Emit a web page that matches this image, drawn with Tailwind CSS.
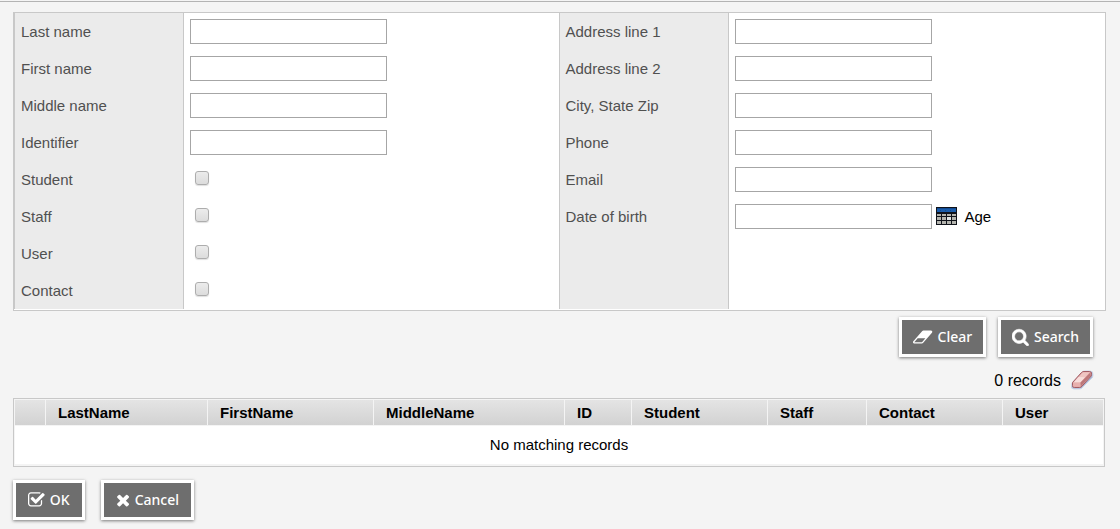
<!DOCTYPE html>
<html lang="en">
<head>
  <meta charset="UTF-8" />
  <meta name="viewport" content="width=device-width, initial-scale=1.0" />
  <title>Person Search</title>
  <script src="https://cdn.jsdelivr.net/npm/@tailwindcss/browser@4"></script>
</head>
<body class="bg-[#f4f4f4] min-h-screen pt-px font-['Liberation_Sans',Arial,sans-serif] text-[15px] text-black">
  <form id="searchForm" class="border-t border-[#b3b3b3] pt-[10px] pl-[13px] pr-[14px]">

    <!-- Search fields -->
    <div class="grid grid-cols-[calc(50%-1px)_1fr] bg-white border border-[#c8c8c8] pb-px">
      <div class="text-[#505050]">
        <div class="flex h-[37px]">
          <label for="lastName" class="w-[170px] bg-[#ebebeb] border-x border-[#c8c8c8] pl-[6px] leading-[37px]">Last name</label>
          <input type="text" id="lastName" class="w-[197px] h-[25px] mt-[6px] ml-[6px] px-1 bg-white border border-[#a6a6a6]">
        </div>
        <div class="flex h-[37px]">
          <label for="firstName" class="w-[170px] bg-[#ebebeb] border-x border-[#c8c8c8] pl-[6px] leading-[37px]">First name</label>
          <input type="text" id="firstName" class="w-[197px] h-[25px] mt-[6px] ml-[6px] px-1 bg-white border border-[#a6a6a6]">
        </div>
        <div class="flex h-[37px]">
          <label for="middleName" class="w-[170px] bg-[#ebebeb] border-x border-[#c8c8c8] pl-[6px] leading-[37px]">Middle name</label>
          <input type="text" id="middleName" class="w-[197px] h-[25px] mt-[6px] ml-[6px] px-1 bg-white border border-[#a6a6a6]">
        </div>
        <div class="flex h-[37px]">
          <label for="identifier" class="w-[170px] bg-[#ebebeb] border-x border-[#c8c8c8] pl-[6px] leading-[37px]">Identifier</label>
          <input type="text" id="identifier" class="w-[197px] h-[25px] mt-[6px] ml-[6px] px-1 bg-white border border-[#a6a6a6]">
        </div>
        <div class="flex h-[37px]">
          <label for="student" class="w-[170px] bg-[#ebebeb] border-x border-[#c8c8c8] pl-[6px] leading-[37px]">Student</label>
          <input type="checkbox" id="student" class="appearance-none size-[14px] mt-[10px] ml-[11px] rounded-[3px] border border-[#adadad] bg-linear-to-b from-[#ececec] to-[#dcdcdc] shadow-[0_1px_1px_#e0e0e0] checked:from-[#888888] checked:to-[#666666]">
        </div>
        <div class="flex h-[37px]">
          <label for="staff" class="w-[170px] bg-[#ebebeb] border-x border-[#c8c8c8] pl-[6px] leading-[37px]">Staff</label>
          <input type="checkbox" id="staff" class="appearance-none size-[14px] mt-[10px] ml-[11px] rounded-[3px] border border-[#adadad] bg-linear-to-b from-[#ececec] to-[#dcdcdc] shadow-[0_1px_1px_#e0e0e0] checked:from-[#888888] checked:to-[#666666]">
        </div>
        <div class="flex h-[37px]">
          <label for="user" class="w-[170px] bg-[#ebebeb] border-x border-[#c8c8c8] pl-[6px] leading-[37px]">User</label>
          <input type="checkbox" id="user" class="appearance-none size-[14px] mt-[10px] ml-[11px] rounded-[3px] border border-[#adadad] bg-linear-to-b from-[#ececec] to-[#dcdcdc] shadow-[0_1px_1px_#e0e0e0] checked:from-[#888888] checked:to-[#666666]">
        </div>
        <div class="flex h-[37px]">
          <label for="contact" class="w-[170px] bg-[#ebebeb] border-x border-[#c8c8c8] pl-[6px] leading-[37px]">Contact</label>
          <input type="checkbox" id="contact" class="appearance-none size-[14px] mt-[10px] ml-[11px] rounded-[3px] border border-[#adadad] bg-linear-to-b from-[#ececec] to-[#dcdcdc] shadow-[0_1px_1px_#e0e0e0] checked:from-[#888888] checked:to-[#666666]">
        </div>
      </div>

      <div class="flex flex-col text-[#505050]">
        <div class="flex h-[37px]">
          <label for="address1" class="w-[170px] bg-[#ebebeb] border-x border-[#c8c8c8] pl-[6px] leading-[37px]">Address line 1</label>
          <input type="text" id="address1" class="w-[197px] h-[25px] mt-[6px] ml-[6px] px-1 bg-white border border-[#a6a6a6]">
        </div>
        <div class="flex h-[37px]">
          <label for="address2" class="w-[170px] bg-[#ebebeb] border-x border-[#c8c8c8] pl-[6px] leading-[37px]">Address line 2</label>
          <input type="text" id="address2" class="w-[197px] h-[25px] mt-[6px] ml-[6px] px-1 bg-white border border-[#a6a6a6]">
        </div>
        <div class="flex h-[37px]">
          <label for="city" class="w-[170px] bg-[#ebebeb] border-x border-[#c8c8c8] pl-[6px] leading-[37px]">City, State Zip</label>
          <input type="text" id="city" class="w-[197px] h-[25px] mt-[6px] ml-[6px] px-1 bg-white border border-[#a6a6a6]">
        </div>
        <div class="flex h-[37px]">
          <label for="phone" class="w-[170px] bg-[#ebebeb] border-x border-[#c8c8c8] pl-[6px] leading-[37px]">Phone</label>
          <input type="text" id="phone" class="w-[197px] h-[25px] mt-[6px] ml-[6px] px-1 bg-white border border-[#a6a6a6]">
        </div>
        <div class="flex h-[37px]">
          <label for="email" class="w-[170px] bg-[#ebebeb] border-x border-[#c8c8c8] pl-[6px] leading-[37px]">Email</label>
          <input type="text" id="email" class="w-[197px] h-[25px] mt-[6px] ml-[6px] px-1 bg-white border border-[#a6a6a6]">
        </div>
        <div class="flex h-[37px]">
          <label for="dob" class="w-[170px] bg-[#ebebeb] border-x border-[#c8c8c8] pl-[6px] leading-[37px]">Date of birth</label>
          <input type="text" id="dob" class="w-[197px] h-[25px] mt-[6px] ml-[6px] px-1 bg-white border border-[#a6a6a6]">
          <button type="button" aria-label="Pick a date" class="ml-1 mr-2 h-9">
            <svg class="w-[21px] h-[18px]" viewBox="0 0 21 18" shape-rendering="crispEdges">
              <path fill="#10131a" d="M0 0h21v18H0z"/>
              <path fill="#1a5cab" d="M1 1h19v4H1z"/>
              <path fill="#114a92" d="M1 1h19v1H1zM4 3h1v1H4zM9 3h1v1H9zM14 3h1v1h-1z"/>
              <path fill="#b4b4ae" d="M1 7h4v2H1zM6 7h4v2H6zM11 7h4v2h-4zM16 7h4v2h-4zM1 10h4v3H1zM6 10h4v3H6zM16 10h4v3h-4zM1 14h4v3H1zM6 14h4v3H6zM11 14h4v3h-4zM16 14h4v3h-4z"/>
              <path fill="#e2e6e6" d="M11 10h4v3h-4z"/>
            </svg>
          </button>
          <span class="text-black leading-[37px]">Age</span>
        </div>
        <div class="w-[170px] grow bg-[#ebebeb] border-x border-[#c8c8c8]"></div>
      </div>
    </div>

    <div class="flex justify-end gap-3 mt-[6px] pr-[13px]">
      <button type="reset" class="flex items-center gap-[5px] h-10 px-[11px] border-[3px] border-white bg-[#6e6e6e] hover:bg-[#555555] text-white text-sm font-medium font-['Noto_Sans',sans-serif] shadow-[0_1px_3px_#00000080]">
        <svg class="h-[18px]" viewBox="0 0 1920 1792" fill="currentColor"><path d="M896 1408l336-384H464l-336 384h768zM1909 331q15 34 9.500 71.500T1889 468L993 1492q-38 44-97 44H128q-38 0-69.500-20.500T11 1461q-15-34-9.500-71.500T31 1324L927 300q38-44 97-44h768q38 0 69.500 20.500T1909 331z"/></svg>
        Clear
      </button>
      <button type="submit" class="flex items-center gap-[5px] h-10 px-[11px] border-[3px] border-white bg-[#6e6e6e] hover:bg-[#555555] text-white text-sm font-medium font-['Noto_Sans',sans-serif] shadow-[0_1px_3px_#00000080]">
        <svg class="h-[18px]" viewBox="64 0 1664 1792" fill="currentColor" stroke="currentColor" stroke-width="60"><path d="M1216 832q0-185-131.500-316.500T768 384 451.500 515.500 320 832t131.500 316.500T768 1280t316.500-131.500T1216 832zm512 832q0 52-38 90t-90 38q-54 0-90-38l-343-342q-179 124-399 124-143 0-273.500-55.500t-225-150-150-225T64 832t55.500-273.500 150-225 225-150T768 128t273.500 55.500 225 150 150 225T1472 832q0 220-124 399l343 343q37 37 37 90z"/></svg>
        Search
      </button>
    </div>

    <div class="flex justify-end items-center gap-[9px] mt-2 h-[30px] pr-3 text-base">
      <span id="recordCount" class="pt-px">0 records</span>
      <button type="button" aria-label="Clear records">
        <svg class="w-6 h-5" viewBox="0 0 24 20">
          <path d="M2 13L12 2.500Q13 1 15 1H20Q23.500 1 23 5L22.500 7.500L13 17Q11.500 19 9.500 19H4Q1 19 1.500 16z" fill="#a9b9d8" stroke="#ccd5e6"/>
          <path d="M2.500 12.500L11.500 2.500Q12.500 1.500 14 1.500H19.500Q22 1.500 21.500 4.500L21.200 6L12 16.200Q11 17.500 9.500 17.500H4.500Q2.300 17.500 2.500 15.500z" fill="#dea3a3" stroke="#a35b62"/>
          <path d="M13 2.200H19.800L10.500 12.500H3.500z" fill="#efc5c2"/>
          <path d="M8.500 7L15 7.200L10.500 12.300H4z" fill="#f8dedc"/>
          <path d="M3 13H10L10 16.800H4.500Q3 16.800 3 15.500z" fill="#e8b0ae"/>
          <path d="M10.500 12.500L20.200 2.800L20.800 5.500L11 16.200z" fill="#bd7779"/>
        </svg>
      </button>
    </div>

    <!-- Results -->
    <div class="mt-[3px] mr-px border border-[#c8c8c8] pb-px">
      <table class="table-fixed w-full border-separate border-spacing-px text-left">
        <thead>
          <tr class="h-[25px] bg-linear-to-b from-[#e4e4e4] to-[#d2d2d2]">
            <th class="w-[30px]"></th>
            <th class="w-[161px] p-0 pt-[2px] pl-3">LastName</th>
            <th class="w-[165px] p-0 pt-[2px] pl-3">FirstName</th>
            <th class="w-[190px] p-0 pt-[2px] pl-3">MiddleName</th>
            <th class="w-[66px] p-0 pt-[2px] pl-3">ID</th>
            <th class="w-[135px] p-0 pt-[2px] pl-3">Student</th>
            <th class="w-[98px] p-0 pt-[2px] pl-3">Staff</th>
            <th class="w-[135px] p-0 pt-[2px] pl-3">Contact</th>
            <th class="w-[100px] p-0 pt-[2px] pl-3">User</th>
          </tr>
        </thead>
        <tbody>
          <tr class="h-[38px] bg-white">
            <td colspan="9" class="p-0 text-center">No matching records</td>
          </tr>
        </tbody>
      </table>
    </div>

    <div class="flex gap-4 mt-[13px] pb-[9px]">
      <button type="button" class="flex items-center gap-[5px] h-10 px-3 border-[3px] border-white bg-[#6e6e6e] hover:bg-[#555555] text-white text-sm font-medium font-['Noto_Sans',sans-serif] shadow-[0_1px_3px_#00000080]">
        <svg class="h-[18px]" viewBox="0 0 1664 1792" fill="currentColor"><path d="M1408 930v318q0 119-84.500 203.500T1120 1536H288q-119 0-203.500-84.500T0 1248V416q0-119 84.500-203.500T288 128h832q63 0 117 25 15 7 18 23 3 17-9 29l-49 49q-10 10-23 10-3 0-9-2-23-6-45-6H288q-66 0-113 47t-47 113v832q0 66 47 113t113 47h832q66 0 113-47t47-113V994q0-13 9-22l64-64q10-10 23-10 6 0 12 3 20 8 20 29zm231-489L825 1255q-24 24-57 24t-57-24L281 825q-24-24-24-57t24-57l110-110q24-24 57-24t57 24l263 263 647-647q24-24 57-24t57 24l110 110q24 24 24 57t-24 57z"/></svg>
        OK
      </button>
      <button type="button" class="flex items-center gap-[5px] h-10 px-3 border-[3px] border-white bg-[#6e6e6e] hover:bg-[#555555] text-white text-sm font-medium font-['Noto_Sans',sans-serif] shadow-[0_1px_3px_#00000080]">
        <svg class="h-[18px]" viewBox="0 0 1408 1792" fill="currentColor"><path d="M1298 1322q0 40-28 68l-136 136q-28 28-68 28t-68-28l-294-294-294 294q-28 28-68 28t-68-28l-136-136q-28-28-28-68t28-68l294-294-294-294q-28-28-28-68t28-68l136-136q28-28 68-28t68 28l294 294 294-294q28-28 68-28t68 28l136 136q28 28 28 68t-28 68l-294 294 294 294q28 28 28 68z"/></svg>
        Cancel
      </button>
    </div>
  </form>

  <script>
    let form = document.getElementById("searchForm");

    form.addEventListener("submit", (e) => {
      e.preventDefault();
      document.getElementById("recordCount").textContent = "0 records";
    });
  </script>
</body>
</html>
